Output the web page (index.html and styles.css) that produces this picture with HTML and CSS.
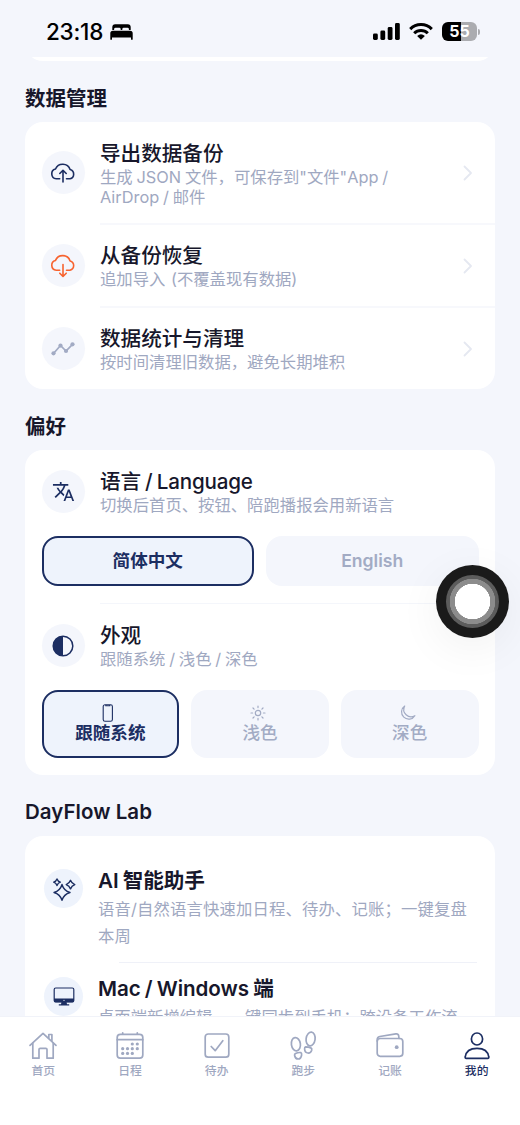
FILE: index.html
```html
<!DOCTYPE html>
<html lang="zh-CN">
<head>
<meta charset="utf-8">
<meta name="viewport" content="width=device-width, initial-scale=1">
<title>DayFlow</title>
<link rel="stylesheet" href="styles.css">
</head>
<body>
<div class="app">
  <header class="status">
    <span class="time">23:18</span>
    <svg class="bed" width="23" height="16" viewBox="0 0 23 16"><path d="M2.300 6V3.200Q2.300 .3 5.200 .3H17.800Q20.700 .3 20.700 3.200V6H18.900V5.200Q18.900 3.800 17.500 3.800H13.700Q12.300 3.800 12.300 5.200V6H10.700V5.200Q10.700 3.800 9.300 3.800H5.500Q4.100 3.800 4.100 5.200V6ZM.3 15.200V9.300Q.3 6.700 2.900 6.700H20.100Q22.700 6.700 22.700 9.300V15.200Q22.700 15.700 22.100 15.700H21.600Q21 15.700 21 15.200V13.600H2V15.200Q2 15.700 1.400 15.700H.9Q.3 15.700 .3 15.200Z"/></svg>
    <span class="status-right">
      <svg width="27" height="17" viewBox="0 0 27 17"><rect x="0" y="10.500" width="4.800" height="6.500" rx="1.400"/><rect x="7.400" y="7.500" width="4.800" height="9.500" rx="1.400"/><rect x="14.700" y="4" width="4.800" height="13" rx="1.400"/><rect x="22" y="0" width="4.800" height="17" rx="1.400"/></svg>
      <svg width="24" height="17" viewBox="0 0 24 17"><g fill="none" stroke="#000" stroke-width="3"><path d="M1.200 6.100A15.200 15.200 0 0 1 22.800 6.100"/><path d="M5.200 10.200A9.600 9.600 0 0 1 18.800 10.200"/></g><path d="M12 16.800L8.100 12.900Q12 9.500 15.900 12.900Z"/></svg>
      <span class="battery"><span class="battery-body">55</span><span class="battery-tip"></span></span>
    </span>
  </header>

  <main class="content">
    <div class="tail"><div class="card tail-card"></div></div>

    <h2 class="section">数据管理</h2>
    <section class="card data-card">
      <div class="row row-tall">
        <span class="badge"><svg width="26" height="22" viewBox="0 0 26 22" fill="none" stroke="#1c2e62" stroke-width="1.600" stroke-linecap="round" stroke-linejoin="round"><path d="M9.700 16.800H6.200A5 5 0 0 1 5.500 7A7.800 7.800 0 0 1 20.100 7.500A4.800 4.800 0 0 1 20 16.800H16.500"/><path d="M13 20V8.500M9.800 11.500L13 8.300L16.200 11.500"/></svg></span>
        <div class="text"><div class="title">导出数据备份</div><div class="sub">生成 JSON 文件，可保存到"文件"App / AirDrop / 邮件</div></div>
        <svg class="chevron" width="10" height="16" viewBox="0 0 10 16"><path d="M1.500 1.500L8 8L1.500 14.500"/></svg>
      </div>
      <div class="divider"></div>
      <div class="row">
        <span class="badge"><svg width="26" height="24" viewBox="0 0 26 24" fill="none" stroke="#f7632f" stroke-width="1.600" stroke-linecap="round" stroke-linejoin="round"><path d="M9.700 16.200H6.200A5 5 0 0 1 5.500 6.400A7.800 7.800 0 0 1 20.100 6.900A4.800 4.800 0 0 1 20 16.200H16.500"/><path d="M13 10.500V22.300M9.800 19.200L13 22.500L16.200 19.200"/></svg></span>
        <div class="text"><div class="title">从备份恢复</div><div class="sub sub-loose">追加导入 (不覆盖现有数据)</div></div>
        <svg class="chevron" width="10" height="16" viewBox="0 0 10 16"><path d="M1.500 1.500L8 8L1.500 14.500"/></svg>
      </div>
      <div class="divider"></div>
      <div class="row">
        <span class="badge"><svg width="24" height="14" viewBox="0 0 24 14" fill="#a2abc4"><path d="M2.500 11.500L9.500 3.500L15 9L21.500 2.300" fill="none" stroke="#a2abc4" stroke-width="1.700"/><circle cx="2.500" cy="11.300" r="2.100"/><circle cx="9.500" cy="3.600" r="2.100"/><circle cx="15" cy="9" r="2.100"/><circle cx="21.500" cy="2.300" r="2.100"/></svg></span>
        <div class="text"><div class="title">数据统计与清理</div><div class="sub">按时间清理旧数据，避免长期堆积</div></div>
        <svg class="chevron" width="10" height="16" viewBox="0 0 10 16"><path d="M1.500 1.500L8 8L1.500 14.500"/></svg>
      </div>
    </section>

    <h2 class="section">偏好</h2>
    <section class="card pref-card">
      <div class="row">
        <span class="badge"><svg width="23" height="23" viewBox="0 0 24 24" fill="#1c2e62"><path d="M12.870 15.070l-2.540-2.510.03-.03A17.520 17.520 0 0 0 14.070 6H17V4.200h-7V2.200H8.200v2H1v1.800h11.170C11.500 7.920 10.440 9.750 9 11.350 8.070 10.320 7.300 9.190 6.690 8h-1.900c.73 1.630 1.730 3.170 2.980 4.560l-5.090 5.020L4 18.900l5-5 3.110 3.110.76-1.940zM18.400 10h-1.800L12 22h1.900l1.150-3.100h5L21.200 22h1.900l-4.700-12zm-2.700 7.100l1.800-4.800L19.300 17.100h-3.600z"/></svg></span>
        <div class="text"><div class="title">语言 / Language</div><div class="sub">切换后首页、按钮、陪跑播报会用新语言</div></div>
      </div>
      <div class="options">
        <div class="option selected">简体中文</div>
        <div class="option">English</div>
      </div>
      <div class="divider thin"></div>
      <div class="row row-theme">
        <span class="badge"><svg width="22" height="22" viewBox="0 0 22 22"><circle cx="11" cy="11" r="9.800" fill="none" stroke="#1c2e62" stroke-width="1.500"/><path d="M11 1A10 10 0 0 0 11 21Z" fill="#1c2e62"/></svg></span>
        <div class="text"><div class="title">外观</div><div class="sub">跟随系统 / 浅色 / 深色</div></div>
      </div>
      <div class="options themes">
        <div class="option selected"><svg width="12" height="18" viewBox="0 0 12 18" fill="none" stroke="#1c2e62" stroke-width="1.100"><rect x="1.200" y=".8" width="9.200" height="16.400" rx="1.800"/><path d="M3.800 1V1.800H7.800V1"/></svg><span>跟随系统</span></div>
        <div class="option"><svg class="sun" width="16" height="18" viewBox="0 0 16 18" fill="none" stroke="#a2abc4" stroke-width="1.200" stroke-linecap="round"><circle cx="8" cy="9" r="2.700"/><path d="M8 2V3.600M8 14.400V16M1 9H2.600M13.400 9H15M3 4L4.100 5.100M11.900 12.900L13 14M3 14L4.100 12.900M11.900 5.100L13 4"/></svg><span>浅色</span></div>
        <div class="option"><svg width="18" height="18" viewBox="0 0 18 18" fill="none" stroke="#a2abc4" stroke-width="1.200" stroke-linejoin="round"><path d="M5.700 2A7.200 7.200 0 1 0 15.900 11.700A7.300 7.300 0 0 1 5.700 2Z"/></svg><span>深色</span></div>
      </div>
    </section>

    <h2 class="section section-lab">DayFlow Lab</h2>
    <section class="card lab-card">
      <div class="lab-row">
        <span class="badge lab-badge"><svg width="24" height="24" viewBox="0 0 24 24" fill="none" stroke="#1c2e62" stroke-width="1.400" stroke-linejoin="round"><path d="M10 7.500Q11.800 13.700 18 15.500Q11.800 17.300 10 23.300Q8.200 17.300 2 15.500Q8.200 13.700 10 7.500Z"/><path d="M5 1.900Q5.900 4.300 8.300 5.200Q5.900 6.100 5 8.500Q4.100 6.100 1.700 5.200Q4.100 4.300 5 1.900Z"/><path d="M18.500 3.300Q19.600 6.500 22.800 7.600Q19.600 8.700 18.500 11.900Q17.400 8.700 14.200 7.600Q17.400 6.500 18.500 3.300Z"/></svg></span>
        <div class="text"><div class="title">AI 智能助手</div><div class="sub sub-spaced">语音/自然语言快速加日程、待办、记账；一键复盘本周</div></div>
      </div>
      <div class="lab-divider"></div>
      <div class="lab-row lab-row-next">
        <span class="badge lab-badge"><svg width="22" height="19" viewBox="0 0 22 19"><rect x="1.200" y="1" width="19.600" height="14" rx="1.500" fill="none" stroke="#1c2e62" stroke-width="1.200"/><path d="M1 11.500H21V14Q21 15.300 19.700 15.300H2.300Q1 15.300 1 14ZM8.500 15H13.500L14 17.200H16.200V18.400H5.800V17.200H8Z" fill="#1c2e62"/><circle cx="11" cy="13.300" r=".6" fill="#fff"/></svg></span>
        <div class="text"><div class="title">Mac / Windows 端</div><div class="sub">桌面端新增编辑，一键同步到手机；跨设备工作流</div></div>
      </div>
    </section>
  </main>

  <nav class="tabs">
    <div class="tab"><svg width="30" height="30" viewBox="0 0 30 30"><path d="M2 14.300L15 2.300L28 14.300"/><path d="M4.800 12V27.200H11V18.500Q11 17.300 12.200 17.300H17.800Q19 17.300 19 18.500V27.200H25.200V12M20.800 7V3.500H23.900V9.800"/></svg><span>首页</span></div>
    <div class="tab"><svg width="30" height="30" viewBox="0 0 30 30"><rect x="2.200" y="3.400" width="25.600" height="23.800" rx="3.200"/><path d="M2.200 8.700H27.800M7.700 1.800V3M22.300 1.800V3"/><g class="dots"><circle cx="17.300" cy="13" r="1.600"/><circle cx="22.300" cy="13" r="1.600"/><circle cx="7.700" cy="17.700" r="1.600"/><circle cx="12.500" cy="17.700" r="1.600"/><circle cx="17.300" cy="17.700" r="1.600"/><circle cx="22.300" cy="17.700" r="1.600"/><circle cx="7.700" cy="22.400" r="1.600"/><circle cx="12.500" cy="22.400" r="1.600"/><circle cx="17.300" cy="22.400" r="1.600"/></g></svg><span>日程</span></div>
    <div class="tab"><svg width="30" height="30" viewBox="0 0 30 30"><rect x="3.200" y="3" width="23.600" height="23.200" rx="3"/><path d="M9.200 15.500L13.200 19.700L20.800 9.700"/></svg><span>待办</span></div>
    <div class="tab"><svg width="30" height="30" viewBox="0 0 30 30"><ellipse cx="7.900" cy="13.200" rx="4.500" ry="6.700" transform="rotate(-8 7.900 13.200)"/><path d="M7.500 22.600Q10.300 21.200 12.800 21.600Q13.900 22 13.600 24Q13 28 10.200 28Q7.300 28 6.600 24.500Q6.300 23 7.500 22.600Z"/><ellipse cx="22.600" cy="8" rx="4.500" ry="6.900" transform="rotate(8 22.600 8)"/><path d="M17.600 15.800Q20.500 15.900 22.800 16.900Q24.200 17.500 23.700 19.200Q22.700 22.300 19.900 22Q16.800 21.700 16.600 18Q16.500 16.100 17.600 15.800Z"/></svg><span>跑步</span></div>
    <div class="tab"><svg width="30" height="30" viewBox="0 0 30 30"><rect x="2.200" y="7.500" width="25.600" height="17.800" rx="3"/><path d="M2.200 10V8.700Q2.200 6 4.800 5.500L20.800 2.900Q23.300 2.500 23.700 4.900L24 7.500"/><circle class="solid" cx="21.700" cy="16.200" r="1.900"/></svg><span>记账</span></div>
    <div class="tab active"><svg width="30" height="30" viewBox="0 0 30 30"><ellipse cx="15" cy="8" rx="5.600" ry="6"/><path d="M4.200 27.300Q3 27.300 3.200 26Q4.300 17.300 15 17.300Q25.700 17.300 26.800 26Q27 27.300 25.800 27.300Z"/></svg><span>我的</span></div>
  </nav>

  <div class="assist"><span></span></div>
</div>
</body>
</html>
```
FILE: styles.css
```css
* { box-sizing: border-box; }
body {
  margin: 0;
  background: #f4f6fc;
  color: #17172b;
  font-family: Inter, "Noto Sans CJK SC", sans-serif;
}
svg { display: block; flex: none; }
.app {
  position: relative;
  height: 1125px;
  display: flex;
  flex-direction: column;
  overflow: hidden;
}

/* Status bar */
.status {
  flex: none;
  height: 57px;
  padding: 6px 40px 0 46px;
  display: flex;
  align-items: center;
  color: #000;
}
.time { font-size: 22.500px; font-weight: 500; letter-spacing: -.25px; line-height: 26px; width: 63.500px; }
.status-right { margin-left: auto; display: flex; align-items: center; gap: 9px; }
.battery { display: flex; align-items: center; gap: 1px; }
.battery-body {
  width: 35px;
  height: 19px;
  border-radius: 6px;
  background: linear-gradient(90deg, #000 55%, #abacb0 55%);
  color: #fff;
  font-size: 16px;
  font-weight: 700;
  line-height: 19px;
  text-align: center;
}
.battery-tip { width: 2px; height: 6px; border-radius: 0 2px 2px 0; background: #abacb0; }

/* Cards */
.content { flex: 1; min-height: 0; padding: 0 25px; overflow: hidden; }
.card { background: #fff; border-radius: 18px; }
.tail { height: 4px; overflow: hidden; display: flex; align-items: flex-end; }
.tail-card { flex: 1; height: 40px; }
.section { margin: 0; height: 61px; padding-top: 14px; font-size: 20.500px; font-weight: 600; line-height: 48px; }
.section-lab { padding-top: 13px; letter-spacing: .05px; }
.row { height: 81px; padding: 0 22px 0 16.500px; display: flex; align-items: center; }
.row-tall { height: 101px; }
.badge {
  flex: none;
  width: 43.500px;
  height: 43.500px;
  border-radius: 50%;
  background: #f4f6fc;
  display: flex;
  align-items: center;
  justify-content: center;
}
.text { margin-left: 15px; flex: 1; min-width: 0; }
.row-tall .text { padding-top: 1px; }
.title { font-size: 20.600px; font-weight: 500; line-height: 27px; word-spacing: -1px; }
.sub { font-size: 16.350px; line-height: 20px; color: #9fa8c1; max-width: 320px; word-spacing: -.8px; }
.sub-loose { word-spacing: 1px; }
.chevron { fill: none; stroke: #e5e8f1; stroke-width: 1.800; stroke-linecap: round; stroke-linejoin: round; }
.divider { height: 2px; margin-left: 75px; background: #f7f8fc; }
.divider.thin { height: 1px; margin-top: 17px; background: #f4f6fb; }

/* Preferences */
.pref-card { height: 325px; padding-top: 1px; }
.pref-card .text { padding-bottom: 1px; }
.pref-card .title { letter-spacing: -.2px; }
.row-theme { height: 83px; }
.options { display: flex; gap: 12px; padding: 0 16.500px; margin-top: 4px; }
.option {
  flex: 1;
  height: 50px;
  border: 2px solid transparent;
  border-radius: 16px;
  background: #f4f6fc;
  color: #a2abc4;
  display: flex;
  flex-direction: column;
  align-items: center;
  justify-content: center;
  font-size: 17.600px;
  font-weight: 600;
  line-height: 24px;
}
.option.selected { border-color: #1c2e62; background: #eef3fc; color: #1c2e62; }
.themes { margin-top: 3px; }
.themes .option { height: 68px; }
.themes .option svg { margin-right: 4px; }
.themes .option span { line-height: 22px; }
.themes .option:not(.selected) { font-weight: 500; }

/* Lab */
.lab-card { padding: 30px 18px 0 19px; height: 300px; }
.lab-row { display: flex; align-items: flex-start; }
.lab-row .text { padding-top: 1px; }
.lab-badge { width: 39px; height: 39px; margin-top: 3px; background: #eef3fc; }
.lab-row .title { font-weight: 600; line-height: 28px; letter-spacing: -.05px; }
.lab-row .sub { line-height: 27px; max-width: none; margin-top: 1px; }
.lab-row .sub-spaced { letter-spacing: .15px; }
.lab-divider { height: 1px; margin: 12px 0 0 75px; background: #eff1f8; }
.lab-row-next { margin-top: 11px; }

/* Tab bar */
.tabs {
  flex: none;
  height: 109px;
  padding-top: 13px;
  background: #fff;
  border-top: 1px solid #f1f3f9;
  display: grid;
  grid-template-columns: repeat(6, 1fr);
}
.tab { display: flex; flex-direction: column; align-items: center; color: #9fa8c1; font-size: 11.800px; font-weight: 500; line-height: 18px; }
.tab span { margin-top: 1px; }
.tab svg { margin-top: 1px; fill: none; stroke: currentColor; stroke-width: 1.700; stroke-linecap: round; stroke-linejoin: round; }
.tab .dots, .tab .solid { fill: currentColor; stroke: none; }
.tab.active { color: #1c2e62; }

/* Floating touch control */
.assist {
  position: absolute;
  left: 436px;
  top: 565px;
  width: 73px;
  height: 73px;
  border-radius: 50%;
  background: #1a1a1a;
  box-shadow: 0 10px 45px rgba(0, 0, 0, .06);
  display: flex;
  align-items: center;
  justify-content: center;
}
.assist span { width: 53px; height: 53px; border-radius: 50%; background: radial-gradient(circle closest-side, #fff 17.500px, #8c8c8c 18px 22.500px, #5c5c5c 23px); }
```
